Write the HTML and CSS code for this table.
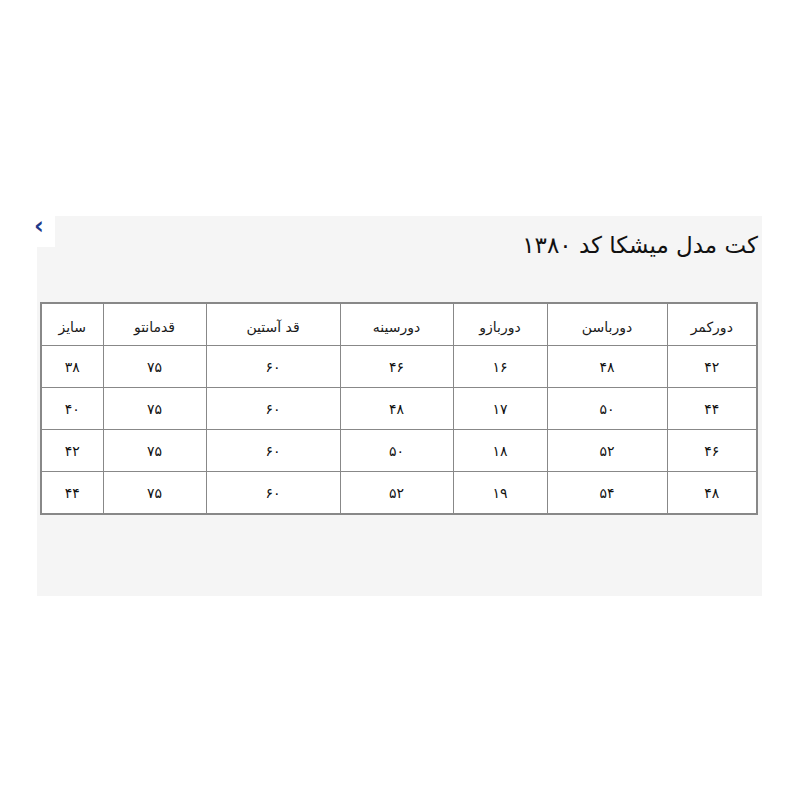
FILE: index.html
```html
<!DOCTYPE html>
<html lang="fa">
<head>
<meta charset="utf-8">
<title>کت مدل میشکا کد ۱۳۸۰</title>
<link rel="stylesheet" href="styles.css">
</head>
<body>
<div class="panel">
  <div class="corner"><span class="corner-glyph">‹</span></div>
  <h1 class="title">کت مدل میشکا کد ۱۳۸۰</h1>
  <table class="sizes">
    <colgroup>
      <col class="c1"><col class="c2"><col class="c3"><col class="c4"><col class="c5"><col class="c6"><col class="c7">
    </colgroup>
    <thead>
      <tr><th>دورکمر</th><th>دورباسن</th><th>دوربازو</th><th>دورسینه</th><th>قد آستین</th><th>قدمانتو</th><th>سایز</th></tr>
    </thead>
    <tbody>
      <tr><td>۴۲</td><td>۴۸</td><td>۱۶</td><td>۴۶</td><td>۶۰</td><td>۷۵</td><td>۳۸</td></tr>
      <tr><td>۴۴</td><td>۵۰</td><td>۱۷</td><td>۴۸</td><td>۶۰</td><td>۷۵</td><td>۴۰</td></tr>
      <tr><td>۴۶</td><td>۵۲</td><td>۱۸</td><td>۵۰</td><td>۶۰</td><td>۷۵</td><td>۴۲</td></tr>
      <tr><td>۴۸</td><td>۵۴</td><td>۱۹</td><td>۵۲</td><td>۶۰</td><td>۷۵</td><td>۴۴</td></tr>
    </tbody>
  </table>
</div>
</body>
</html>
```
FILE: styles.css
```css
html, body {
  margin: 0;
  padding: 0;
  background: #ffffff;
}
body {
  font-family: "DejaVu Sans", sans-serif;
  color: #1a1a1a;
}
.panel {
  position: relative;
  margin: 216px 0 0 37px;
  width: 725px;
  height: 380px;
  box-sizing: border-box;
  padding: 9px 4px 0 4px;
  background: #f5f5f5;
  direction: rtl;
}
.corner {
  position: absolute;
  left: 0;
  top: 0;
  width: 18px;
  height: 31px;
  background: #ffffff;
}
.corner-glyph {
  position: absolute;
  left: -3px;
  top: 0;
  font-size: 24px;
  line-height: 20px;
  font-weight: bold;
  color: #1f3a8a;
  direction: ltr;
}
.title {
  margin: 0;
  height: 40px;
  line-height: 40px;
  font-size: 23px;
  font-weight: normal;
  color: #111;
  text-align: right;
}
.sizes {
  margin-top: 37px;
  width: 716px;
  border-collapse: collapse;
  border: 2px solid #888;
  table-layout: fixed;
  background: #ffffff;
}
.sizes th, .sizes td {
  border: 1px solid #888;
  height: 41px;
  padding: 0;
  text-align: center;
  font-size: 14px;
  font-weight: normal;
  color: #1a1a1a;
}
.sizes th {
  padding-top: 4px;
  height: 37px;
}
.sizes td {
  color: #111;
  padding-top: 1px;
  height: 40px;
}
.c1 { width: 90px; }
.c2 { width: 120px; }
.c3 { width: 94px; }
.c4 { width: 113px; }
.c5 { width: 134px; }
.c6 { width: 103px; }
.c7 { width: 62px; }
```
